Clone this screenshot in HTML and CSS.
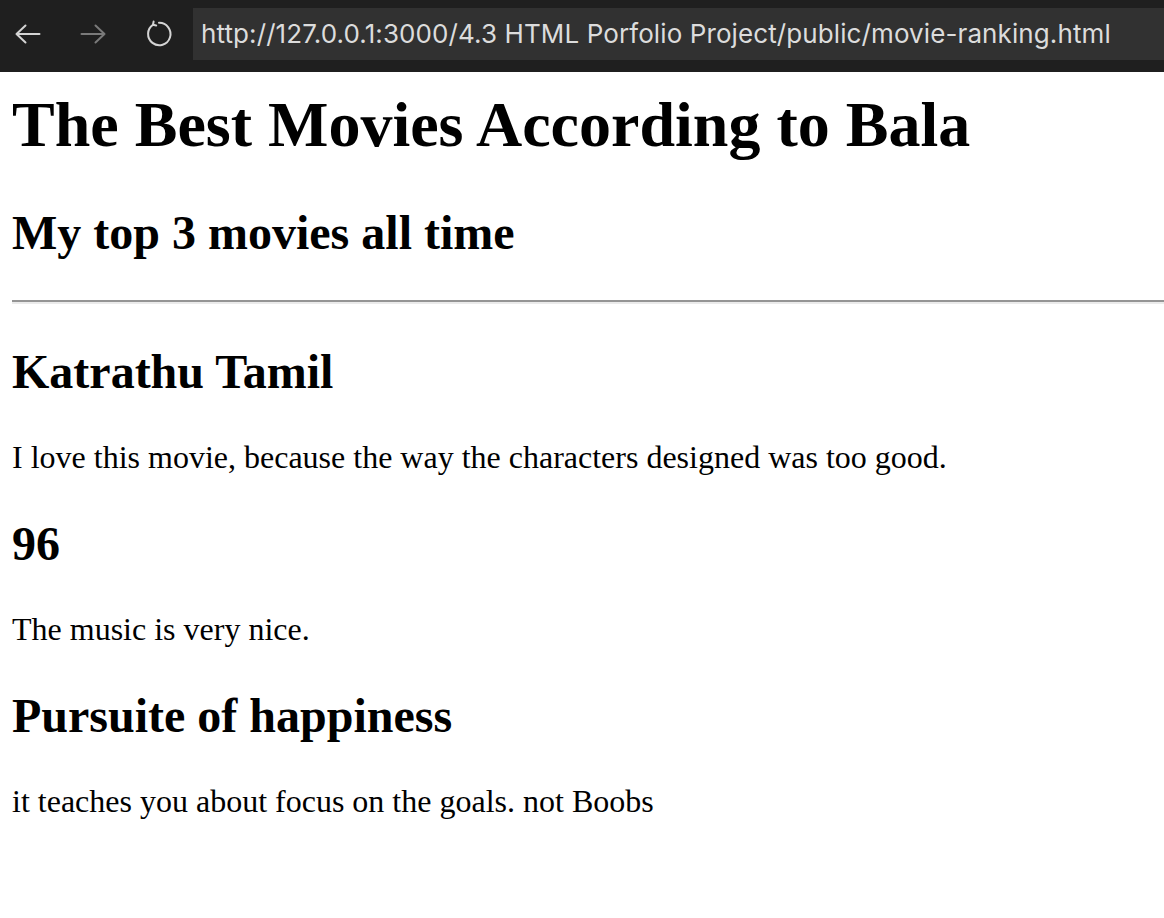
FILE: index.html
```html
<!DOCTYPE html>
<html lang="en">
<head>
<meta charset="utf-8">
<title>Movie Ranking</title>
<link rel="stylesheet" href="styles.css">
</head>
<body>
<header class="toolbar">
  <div class="nav-buttons">
    <span class="nav-btn">
      <svg width="26" height="20" viewBox="0 0 26 20" fill="none" stroke="currentColor" stroke-width="2" stroke-linecap="round" stroke-linejoin="round"><path d="M1.5 10h23M10.5 1.5L1.5 10l9 8.5"/></svg>
    </span>
    <span class="nav-btn nav-btn--disabled">
      <svg width="26" height="20" viewBox="0 0 26 20" fill="none" stroke="currentColor" stroke-width="2" stroke-linecap="round" stroke-linejoin="round"><path d="M1.5 10h23M15.5 1.5l9 8.5-9 8.5"/></svg>
    </span>
    <span class="nav-btn">
      <svg width="28" height="28" viewBox="0 0 28 28" fill="none" stroke="currentColor" stroke-width="2" stroke-linecap="round" stroke-linejoin="round"><path d="M8.2 4.6A11.2 11.2 0 1 0 14 2.8"/><path d="M8.6 1.6l-0.6 3.2 3.2 0.7"/></svg>
    </span>
  </div>
  <div class="url-bar">http://127.0.0.1:3000/4.3 HTML Porfolio Project/public/movie-ranking.html</div>
</header>
<main class="page">
  <h1 class="title">The Best Movies According to Bala</h1>
  <h2 class="heading">My top 3 movies all time</h2>
  <hr class="divider">
  <h2 class="heading">Katrathu Tamil</h2>
  <p class="text">I love this movie, because the way the characters designed was too good.</p>
  <h2 class="heading">96</h2>
  <p class="text">The music is very nice.</p>
  <h2 class="heading">Pursuite of happiness</h2>
  <p class="text">it teaches you about focus on the goals. not Boobs</p>
</main>
</body>
</html>
```

FILE: styles.css
```css
html, body {
  margin: 0;
  padding: 0;
  background: #ffffff;
}

body {
  font-family: "Liberation Serif", "Times New Roman", serif;
  color: #000;
}

.toolbar {
  height: 72px;
  background: #1f1f1f;
  display: flex;
  align-items: flex-start;
  box-sizing: border-box;
  padding-top: 8px;
}

.nav-buttons {
  display: flex;
  align-items: center;
  height: 52px;
  padding-left: 15px;
}

.nav-btn {
  display: flex;
  align-items: center;
  justify-content: center;
  color: #d4d4d4;
  width: 26px;
  margin-right: 39px;
}

.nav-btn:last-child {
  margin-right: 20px;
  width: 28px;
}

.nav-btn--disabled {
  color: #7a7a7a;
}

.url-bar {
  flex: 1;
  height: 52px;
  background: #313131;
  color: #dcdcdc;
  font-family: "Inter", "Noto Sans", sans-serif;
  font-size: 26px;
  letter-spacing: 0.1px;
  line-height: 52px;
  padding-left: 8px;
  white-space: nowrap;
  overflow: hidden;
}

.page {
  padding: 0 0 40px 12px;
}

.title {
  font-size: 64px;
  font-weight: bold;
  margin: 16px 0 43px;
  line-height: normal;
}

.heading {
  font-size: 48px;
  font-weight: bold;
  margin: 40px 0;
  line-height: normal;
}

.divider {
  margin: 16px 0 0;
  border: 0;
  border-top: 2px solid #959595;
  border-bottom: 2px solid #ebebeb;
  height: 0;
}

.text {
  font-size: 32px;
  margin: 32px 0;
  line-height: normal;
}
```
